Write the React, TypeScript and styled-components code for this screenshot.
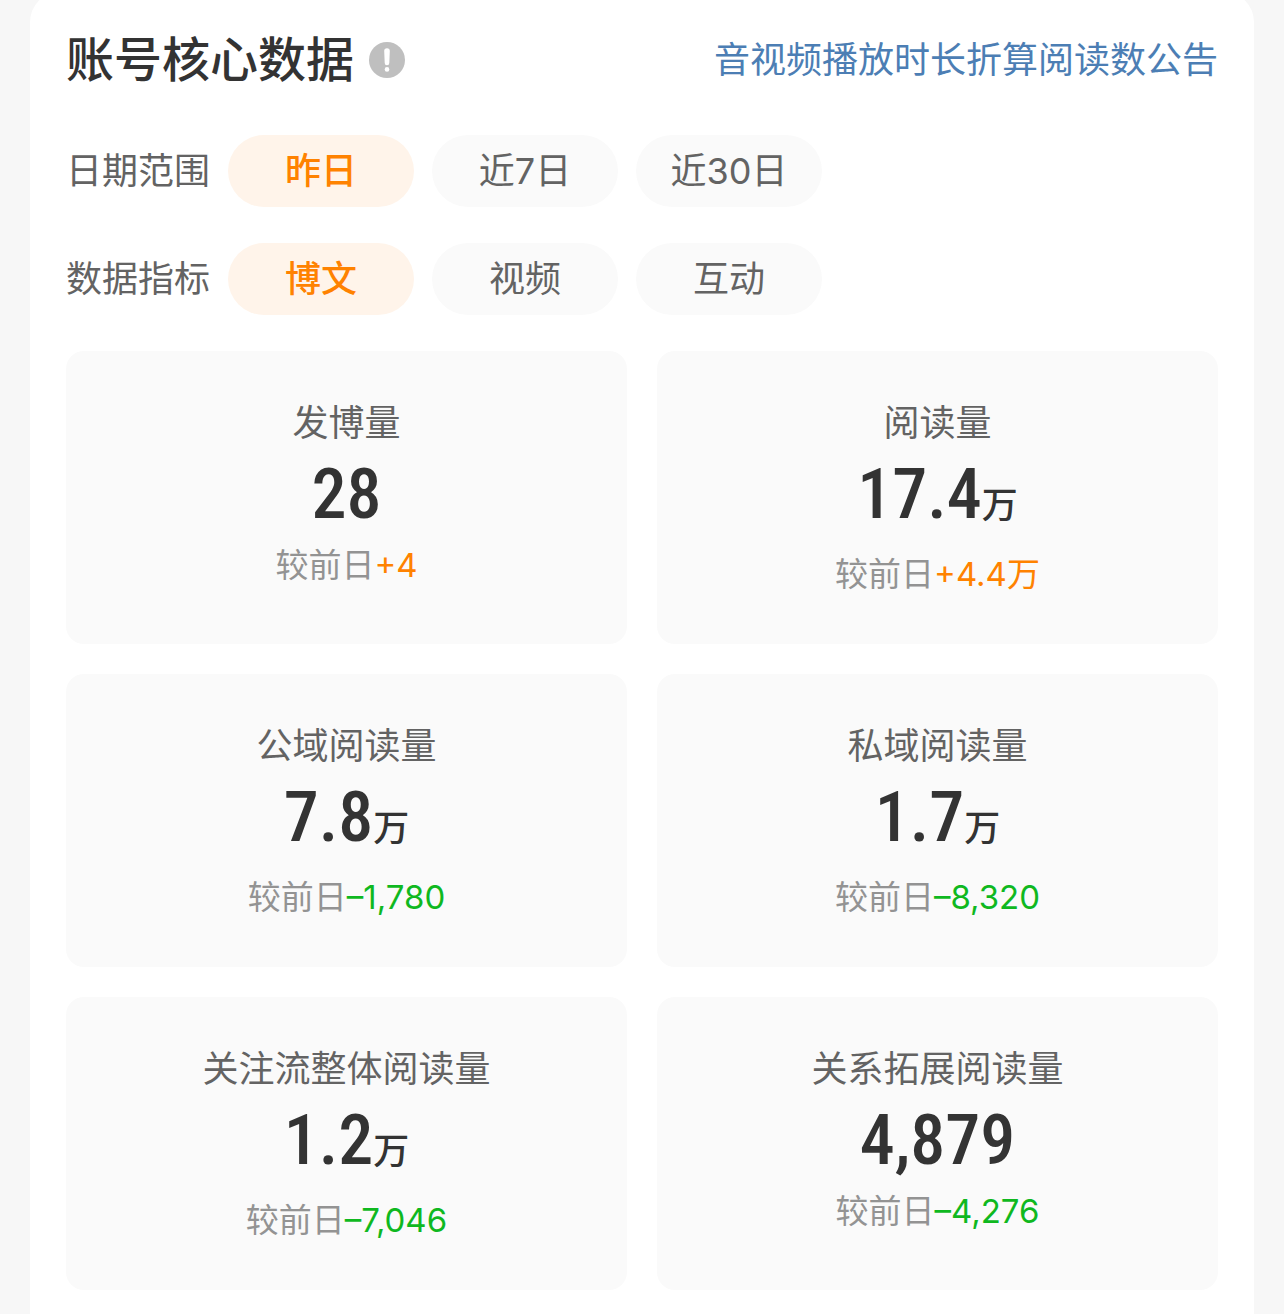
import { useState } from 'react';
import styled, { createGlobalStyle } from 'styled-components';

const GlobalStyle = createGlobalStyle`
  * { box-sizing: border-box; }
  body {
    margin: 0;
    background: #f7f7f7;
    color: #333;
    font-family: Inter, 'Noto Sans CJK SC', sans-serif;
  }
`;

const Page = styled.main`
  min-height: 100vh;
  padding: 0 30px;
  display: flex;
`;

const Panel = styled.section`
  flex: 1;
  min-width: 0;
  margin-top: -8px;
  padding: 32px 36px 24px;
  background: #fff;
  border-radius: 30px 30px 0 0;
`;

const Header = styled.header`
  display: flex;
  align-items: center;
  justify-content: space-between;
  height: 72px;
  margin-bottom: 39px;
`;

const TitleGroup = styled.div`
  display: flex;
  align-items: center;
  gap: 15px;
`;

const Title = styled.h1`
  margin: 0;
  font-size: 48px;
  line-height: 72px;
  font-weight: 500;
`;

const InfoButton = styled.button`
  display: flex;
  padding: 0;
  border: 0;
  background: none;
  cursor: pointer;
`;

const NoticeLink = styled.a`
  color: #4c7eb4;
  font-size: 36px;
  line-height: 54px;
  text-decoration: none;
`;

const Filters = styled.div`
  display: grid;
  gap: 36px;
  margin-bottom: 36px;
`;

const FilterRow = styled.div`
  display: flex;
  align-items: center;
  gap: 18px;
`;

const FilterLabel = styled.span`
  color: #636363;
  font-size: 36px;
  line-height: 72px;
`;

const Pill = styled.button<{ $active: boolean }>`
  width: 186px;
  height: 72px;
  padding: 0;
  border: 0;
  border-radius: 36px;
  background: ${(p) => (p.$active ? '#fff4ea' : '#fafafa')};
  color: ${(p) => (p.$active ? '#ff8200' : '#636363')};
  font-family: inherit;
  font-size: 36px;
  line-height: 72px;
  font-weight: ${(p) => (p.$active ? 500 : 400)};
  cursor: pointer;
`;

const Tiles = styled.div`
  display: grid;
  grid-template-columns: repeat(2, 1fr);
  gap: 30px;
`;

const Tile = styled.article`
  display: flex;
  flex-direction: column;
  align-items: center;
  min-height: 293px;
  padding: 45px 0;
  border-radius: 18px;
  background: #fafafa;
`;

const TileLabel = styled.h2`
  margin: 0;
  color: #636363;
  font-size: 36px;
  line-height: 54px;
  font-weight: 400;
`;

const Value = styled.div<{ $hasUnit: boolean }>`
  display: flex;
  align-items: baseline;
  height: ${(p) => (p.$hasUnit ? 99 : 90)}px;
`;

const Digits = styled.span`
  font-family: 'Roboto Condensed', 'Liberation Sans Narrow', 'Liberation Sans', sans-serif;
  font-size: 70px;
  line-height: 88px;
  font-weight: 500;
`;

const Unit = styled.span`
  font-size: 36px;
  line-height: 54px;
  font-weight: 500;
`;

const Compare = styled.p`
  margin: 0;
  color: #939393;
  font-size: 33px;
  line-height: 50px;
`;

const Delta = styled.span<{ $up: boolean }>`
  color: ${(p) => (p.$up ? '#ff8200' : '#0fb81f')};
`;

const filters = [
  { label: '日期范围', options: ['昨日', '近7日', '近30日'] },
  { label: '数据指标', options: ['博文', '视频', '互动'] },
];

const stats = [
  { label: '发博量', value: '28', unit: '', delta: '+4' },
  { label: '阅读量', value: '17.4', unit: '万', delta: '+4.4万' },
  { label: '公域阅读量', value: '7.8', unit: '万', delta: '–1,780' },
  { label: '私域阅读量', value: '1.7', unit: '万', delta: '–8,320' },
  { label: '关注流整体阅读量', value: '1.2', unit: '万', delta: '–7,046' },
  { label: '关系拓展阅读量', value: '4,879', unit: '', delta: '–4,276' },
];

function InfoIcon() {
  return (
    <svg width="36" height="36" viewBox="0 0 36 36" aria-hidden="true">
      <circle cx="18" cy="18" r="18" fill="#bfbfbf" />
      <path d="M15.2 9a2.8 2.8 0 0 1 5.6 0L20.3 21a2.3 2.3 0 0 1-4.6 0z" fill="#fff" />
      <circle cx="18" cy="27.4" r="2.3" fill="#fff" />
    </svg>
  );
}

export default function App() {
  const [selected, setSelected] = useState([0, 0]);
  const choose = (row: number, option: number) =>
    setSelected((prev) => prev.map((v, i) => (i === row ? option : v)));

  return (
    <Page>
      <GlobalStyle />
      <Panel>
        <Header>
          <TitleGroup>
            <Title>账号核心数据</Title>
            <InfoButton type="button" aria-label="说明">
              <InfoIcon />
            </InfoButton>
          </TitleGroup>
          <NoticeLink href="#notice">音视频播放时长折算阅读数公告</NoticeLink>
        </Header>
        <Filters>
          {filters.map((filter, row) => (
            <FilterRow key={filter.label} role="group" aria-labelledby={`filter-${row}`}>
              <FilterLabel id={`filter-${row}`}>{filter.label}</FilterLabel>
              {filter.options.map((option, i) => (
                <Pill
                  key={option}
                  type="button"
                  $active={selected[row] === i}
                  aria-pressed={selected[row] === i}
                  onClick={() => choose(row, i)}
                >
                  {option}
                </Pill>
              ))}
            </FilterRow>
          ))}
        </Filters>
        <Tiles>
          {stats.map((stat) => (
            <Tile key={stat.label}>
              <TileLabel>{stat.label}</TileLabel>
              <Value $hasUnit={stat.unit !== ''}>
                <Digits>{stat.value}</Digits>
                {stat.unit && <Unit>{stat.unit}</Unit>}
              </Value>
              <Compare>
                较前日<Delta $up={stat.delta.startsWith('+')}>{stat.delta}</Delta>
              </Compare>
            </Tile>
          ))}
        </Tiles>
      </Panel>
    </Page>
  );
}
